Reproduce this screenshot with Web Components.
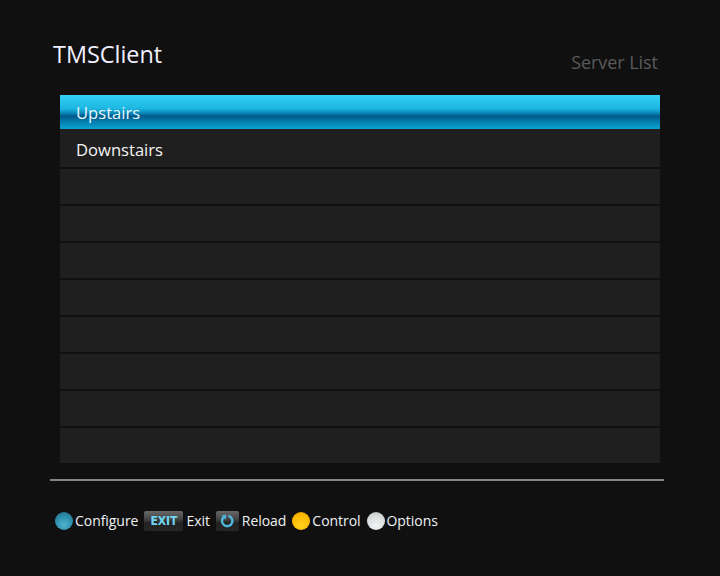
<!DOCTYPE html>
<html>
<head>
<meta charset="utf-8">
<title>TMSClient</title>
<style>
  html, body { margin: 0; height: 100%; background: #101010; }
  body { font-family: "Open Sans", "Noto Sans", sans-serif; }
</style>
</head>
<body>
<tms-screen>
  <span slot="title">TMSClient</span>
  <span slot="subtitle">Server List</span>
  <server-list>
    <server-row selected>Upstairs</server-row>
    <server-row>Downstairs</server-row>
    <server-row></server-row>
    <server-row></server-row>
    <server-row></server-row>
    <server-row></server-row>
    <server-row></server-row>
    <server-row></server-row>
    <server-row></server-row>
    <server-row></server-row>
  </server-list>
  <key-hint slot="footer" icon="blue">Configure</key-hint>
  <key-hint slot="footer" icon="exit">Exit</key-hint>
  <key-hint slot="footer" icon="reload">Reload</key-hint>
  <key-hint slot="footer" icon="yellow">Control</key-hint>
  <key-hint slot="footer" icon="white">Options</key-hint>
</tms-screen>

<script>
class TmsScreen extends HTMLElement {
    constructor() {
        super();
        this.attachShadow({ mode: "open" });
        this.shadowRoot.innerHTML = `
            <style>
                :host { display: block; width: 720px; height: 576px; box-sizing: border-box; padding-top: 37px; overflow: hidden; }
                header { display: flex; justify-content: space-between; align-items: flex-start; height: 58px; padding: 0 62px 0 53px; }
                .title { font-size: 23.4px; line-height: 34px; color: #f0f0ff; }
                .subtitle { font-size: 17.9px; line-height: 26px; margin-top: 12px; color: #5a5a5a; }
                main { padding: 0 60px; }
                hr { margin: 16px 56px 0 50px; border: 0; height: 2px; background: #858585; }
                footer { display: flex; align-items: center; gap: 6px; padding: 30px 0 0 55px; }
            </style>
            <header>
                <div class="title"><slot name="title"></slot></div>
                <div class="subtitle"><slot name="subtitle"></slot></div>
            </header>
            <main><slot></slot></main>
            <hr>
            <footer><slot name="footer"></slot></footer>
        `;
    }
}

class ServerList extends HTMLElement {
    constructor() {
        super();
        this.attachShadow({ mode: "open" });
        this.shadowRoot.innerHTML = `
            <style>
                :host { display: flex; flex-direction: column; gap: 2px; }
            </style>
            <slot></slot>
        `;
    }
}

class ServerRow extends HTMLElement {
    constructor() {
        super();
        this.attachShadow({ mode: "open" });
        this.shadowRoot.innerHTML = `
            <style>
                :host { display: block; box-sizing: border-box; height: 35px; padding: 0 16px; background: #1f1f1f; color: #f4f4f4; font-size: 16.6px; line-height: 36px; }
                :host([selected]) {
                    height: 34px;
                    margin-bottom: 1px;
                    color: #e8f8ff;
                    background: linear-gradient(#35d1f5 0, #1cb6e2 40%, #0a8dbc 52%, #015a8a 62%, #0277a8 75%, #0ba4d2 100%);
                    /* next row runs right up under the highlight */
                    box-shadow: 0 3px 0 #1f1f1f;
                }
            </style>
            <slot></slot>
        `;
    }
}

class KeyHint extends HTMLElement {
    constructor() {
        super();
        this.attachShadow({ mode: "open" });
        const icons = {
            blue: `<span class="ball" style="background: radial-gradient(circle at 50% 70%, #4fb4cf, #2a89a8 60%, #1d6b88)"></span>`,
            yellow: `<span class="ball" style="background: radial-gradient(circle at 50% 75%, #ffd21f, #ffbb00 60%, #e59b00)"></span>`,
            white: `<span class="ball" style="background: radial-gradient(circle at 50% 75%, #f2f4f4, #d8dcdc 60%, #b4b8b8)"></span>`,
            exit: `<span class="key wide">EXIT</span>`,
            reload: `<span class="key"><svg width="16" height="16" viewBox="0 0 16 16"><path d="M4.4 4.4A5.2 5.2 0 1 0 9.4 2.9" fill="none" stroke="#4fb8dc" stroke-width="2.4"/><path d="M2.4 2.4 7.4 1.8 6.6 6.8Z" fill="#4fb8dc"/></svg></span>`
        };
        const type = this.getAttribute("icon");
        this.shadowRoot.innerHTML = `
            <style>
                :host { display: flex; align-items: center; gap: 2px; color: #eef2f4; font-size: 14px; line-height: 20px; letter-spacing: -0.05px; }
                .ball { width: 18px; height: 18px; border-radius: 50%; display: block; }
                .key { box-sizing: border-box; width: 23px; height: 20px; border-radius: 2px; display: flex; align-items: center; justify-content: center;
                       background: linear-gradient(#686868 0, #444 40%, #222 60%, #262626 100%); margin-right: 1px; }
                .wide { width: 39px; color: #6fd6f4; font: bold 12px/20px "DejaVu Sans Condensed", "Open Sans", sans-serif; }
            </style>
            ${icons[type] || ""}
            <slot></slot>
        `;
    }
}

customElements.define("tms-screen", TmsScreen);
customElements.define("server-list", ServerList);
customElements.define("server-row", ServerRow);
customElements.define("key-hint", KeyHint);
</script>
</body>
</html>
